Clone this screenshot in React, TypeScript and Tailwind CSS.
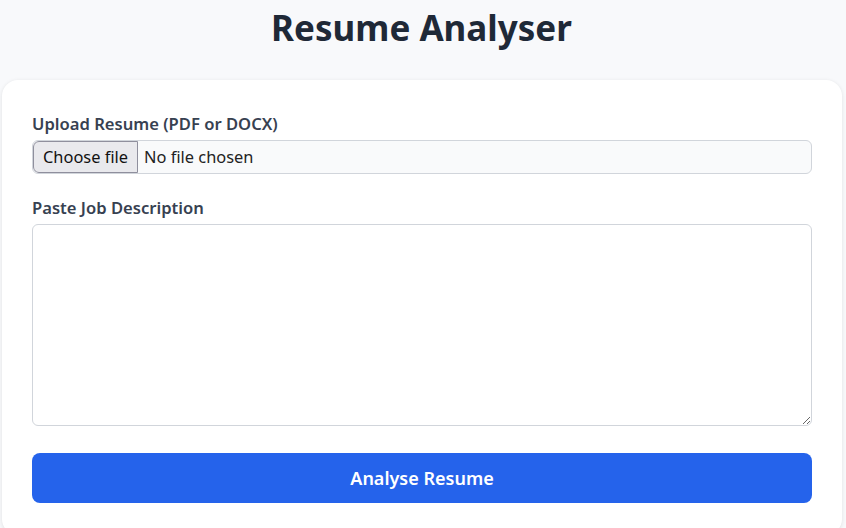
import React from "react";

export default function App() {
  return (
    <div
      className="min-h-[528px] w-full bg-[#f8f9fb] overflow-hidden"
      style={{ fontFamily: '"Noto Sans", "Open Sans", sans-serif' }}
    >
      <div className="w-[843px]">
        <h1 className="pt-[8px] text-center text-[35px] leading-[40px] font-bold text-[#1f2937]">
          Resume Analyser
        </h1>
        <div className="mt-[32px] ml-[2px] w-[840px] rounded-2xl bg-white px-[30px] pt-8 pb-8 shadow-[0_1px_4px_rgba(0,0,0,0.1)]">
          <label className="block text-[16.6px] leading-6 font-semibold text-[#374151]">
            Upload Resume (PDF or DOCX)
          </label>
          <div className="mt-1 flex h-[34px] items-center overflow-hidden rounded-md border border-[#d1d5db] bg-[#f9fafb]">
            <span className="flex h-full items-center rounded-l-md border border-[#8f8f9d] bg-[#e9e9ed] px-[9px] text-[16.4px] text-[#111]">
              Choose file
            </span>
            <span className="pl-[6px] text-[16.4px] text-[#222]">No file chosen</span>
          </div>
          <label className="mt-[22px] block text-[16.6px] leading-6 font-semibold text-[#374151]">
            Paste Job Description
          </label>
          <textarea
            className="mt-1 block h-[202px] w-full resize-y rounded-md border border-[#d1d5db] bg-white p-3 text-[16px] outline-none"
          />
          <button className="mt-[27px] flex h-[50px] w-full items-center justify-center rounded-lg bg-[#2563eb] text-[18px] font-semibold text-white">
            Analyse Resume
          </button>
        </div>
      </div>
    </div>
  );
}
